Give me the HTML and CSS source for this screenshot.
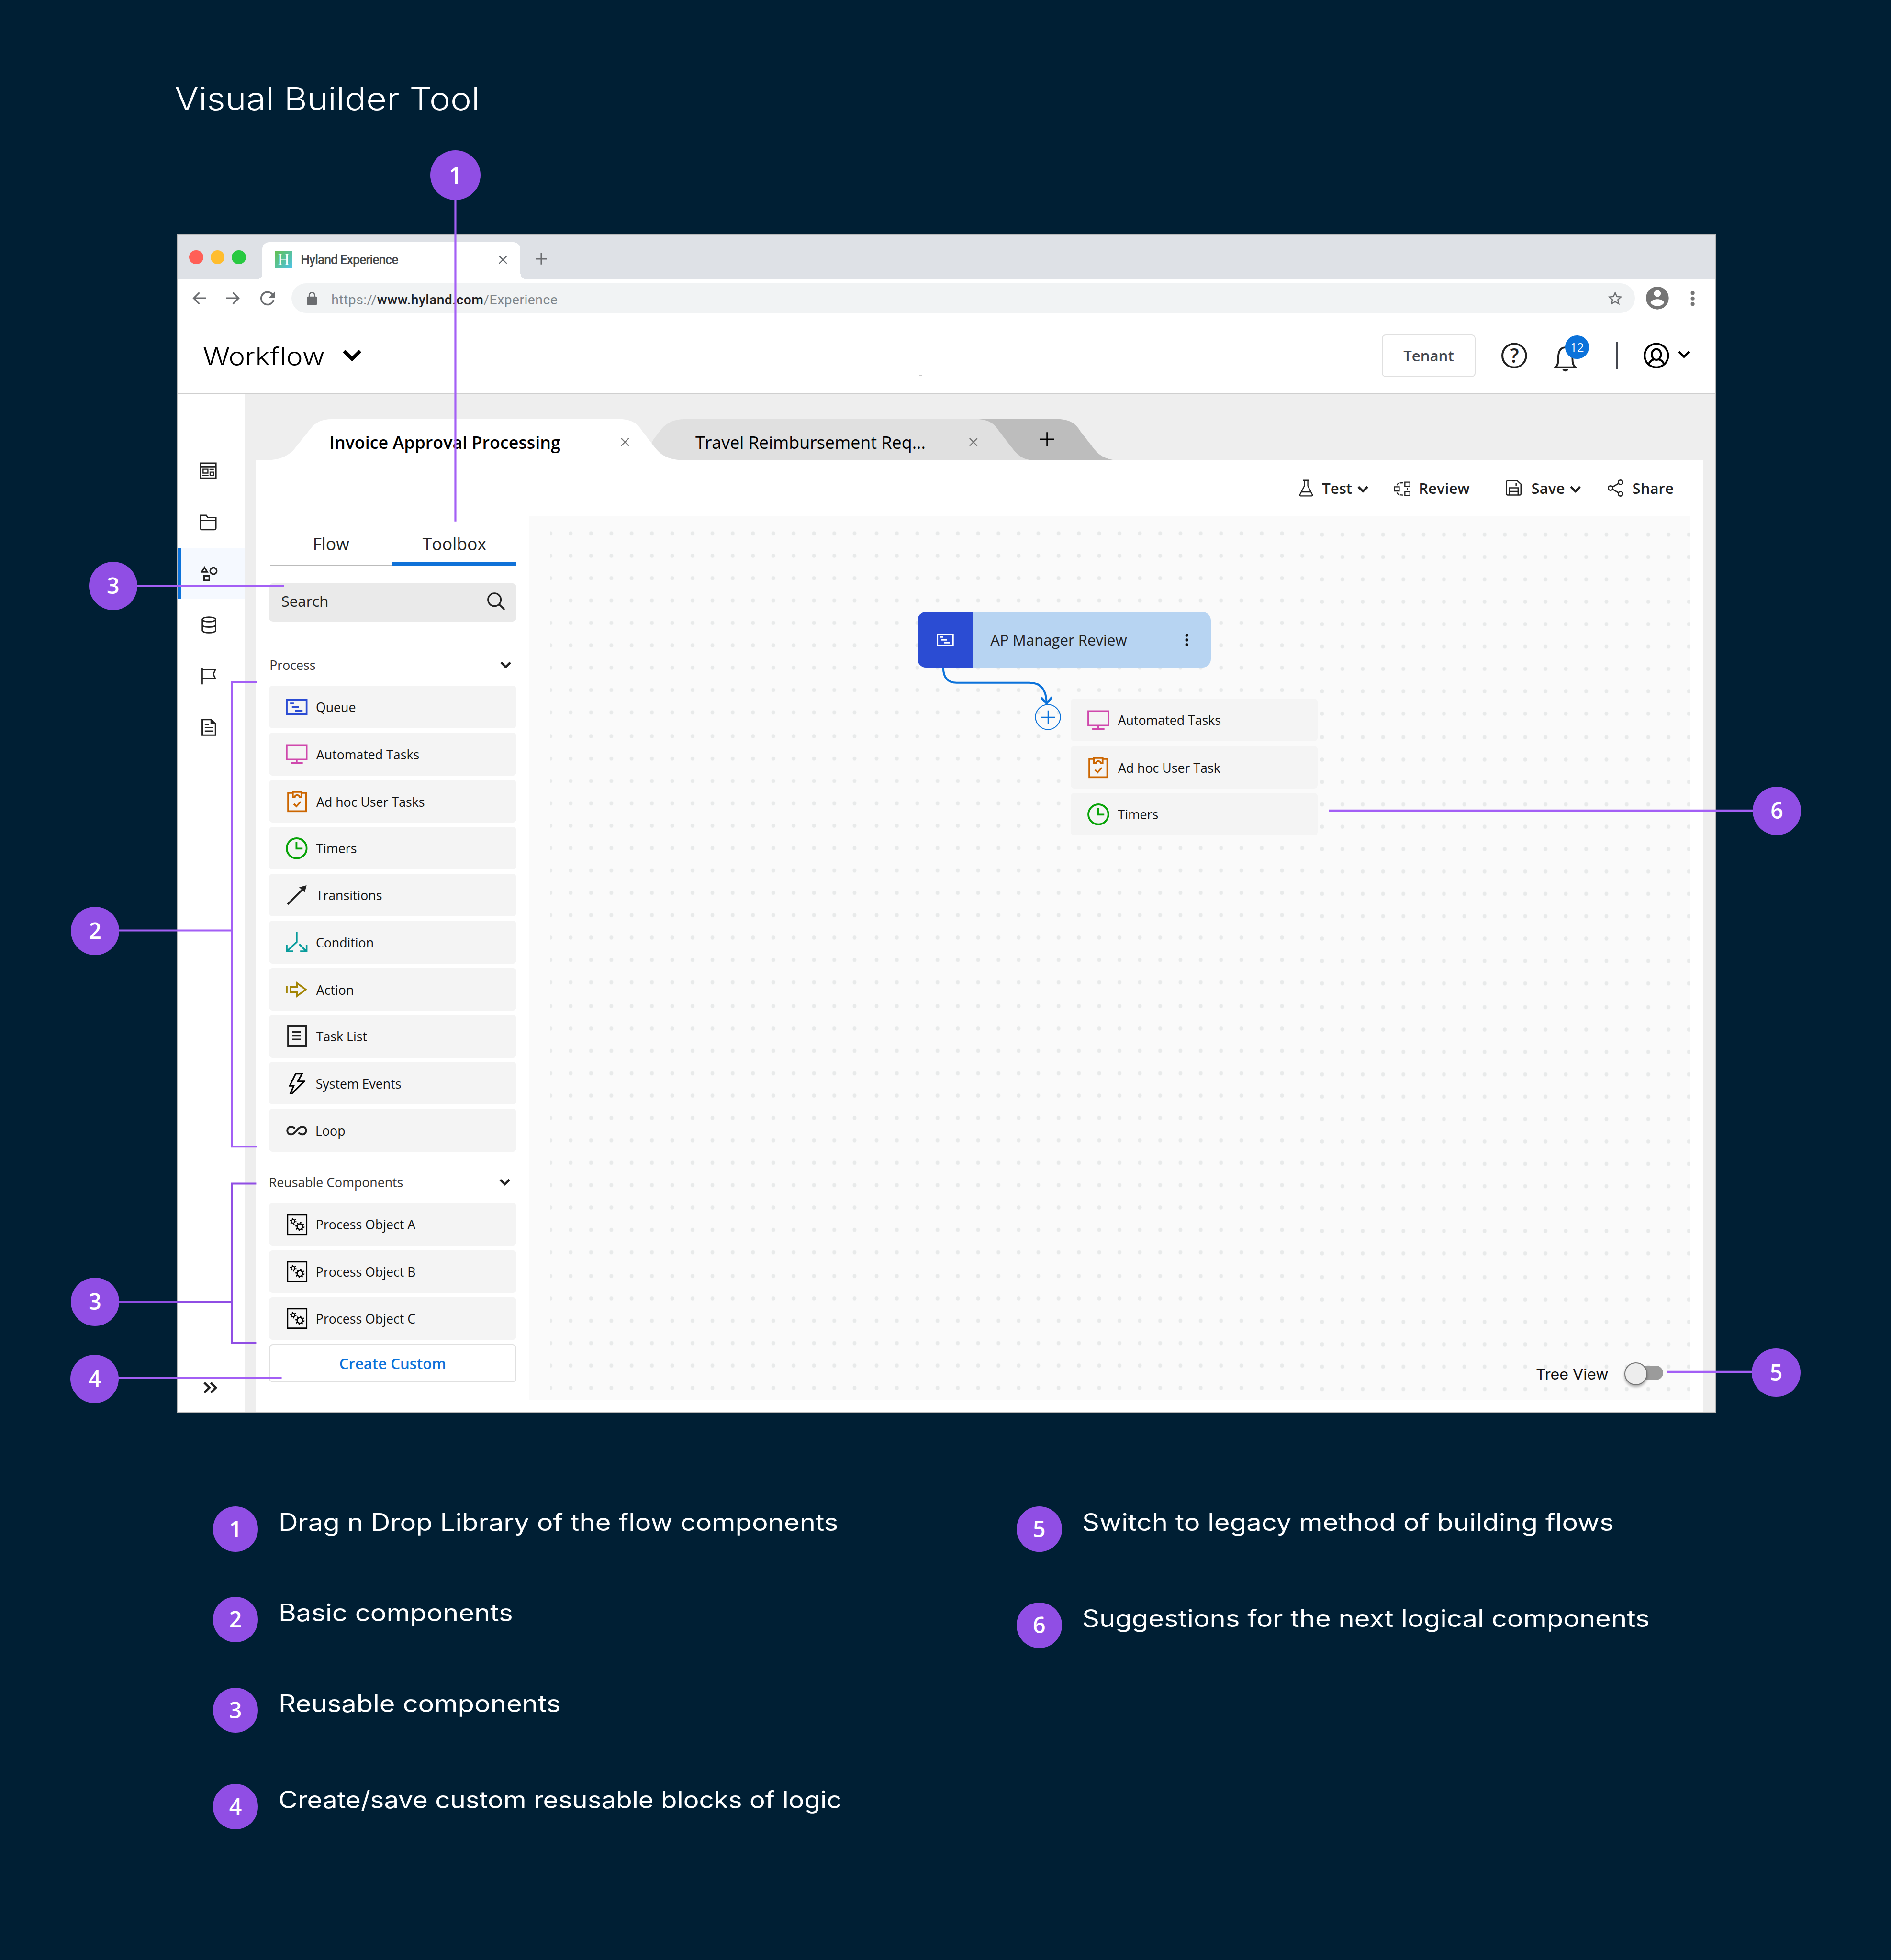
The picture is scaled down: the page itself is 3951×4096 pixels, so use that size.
FILE: index.html
```html
<!DOCTYPE html>
<html lang="en">
<head>
<meta charset="utf-8">
<title>Visual Builder Tool</title>
<link rel="stylesheet" href="styles.css">
</head>
<body>
<svg class="defs" width="0" height="0" aria-hidden="true">
  <symbol id="i-chevron" viewBox="0 0 27 17"><path d="M2.4 2.6 13.5 13.6 24.6 2.6" fill="none" stroke="currentColor" stroke-width="5.4"/></symbol>
  <symbol id="i-close" viewBox="0 0 20 20"><path d="M1 1l18 18M19 1 1 19" fill="none" stroke="currentColor" stroke-width="2.6"/></symbol>
  <symbol id="i-queue" viewBox="0 0 50 37"><path d="M2.2 2.2h45.6v32.6H2.2z" fill="none" stroke="currentColor" stroke-width="4.2"/><path d="M10 10h8.5M14 18.3h16.500M21 26.5h17.500" stroke="currentColor" stroke-width="4.2"/></symbol>
  <symbol id="i-monitor" viewBox="0 0 50 45"><path d="M2.100 2.100h45.800v32.800H2.100zM25 35v7M11 42.600h28" fill="none" stroke="currentColor" stroke-width="4"/></symbol>
  <symbol id="i-clipboard" viewBox="0 0 45 48"><path d="M11 4H2.200v41.800h40.600V4H34M12.800 2h19.400v12.200h-4.200c0-6.500-11-6.500-11 0h-4.200z" fill="none" stroke="currentColor" stroke-width="4"/><path d="M15 29l6 5.500 9.500-10.500" fill="none" stroke="currentColor" stroke-width="4"/></symbol>
  <symbol id="i-timer" viewBox="0 0 50 50"><circle cx="25" cy="25" r="22.800" fill="none" stroke="currentColor" stroke-width="4.200"/><path d="M24.500 10v15.500H38.500" fill="none" stroke="currentColor" stroke-width="4.200"/></symbol>
  <symbol id="i-arrow" viewBox="0 0 45 45"><path d="M2 43 36 9" stroke="currentColor" stroke-width="4"/><path d="M45 0 28 4.500 40.500 16z" fill="currentColor"/></symbol>
  <symbol id="i-branch" viewBox="0 0 50 47"><path d="M25 0v23.500L3.500 43.500M2.200 30v14.600H17M31 28.500 46 43.500M33 44.600h14.800V30" fill="none" stroke="currentColor" stroke-width="4"/></symbol>
  <symbol id="i-action" viewBox="0 0 49 39"><path d="M2.200 11.500v16.200" stroke="currentColor" stroke-width="4"/><path d="M11 13.200h14.200V4.600L45.500 19.500 25.200 34.400v-8.600H11z" fill="none" stroke="currentColor" stroke-width="3.800"/></symbol>
  <symbol id="i-list" viewBox="0 0 45 49"><path d="M2.200 2.200h40.600v44.400H2.200z" fill="none" stroke="currentColor" stroke-width="4.200"/><path d="M11.500 15h19.500M11.500 23.500h19.500M11.500 31.800h19.500" stroke="currentColor" stroke-width="3.800"/></symbol>
  <symbol id="i-bolt" viewBox="0 0 38 49"><path d="M16 1.800h14.500L21 19.200h14.500L7.500 47H4l7.500-17.500H2.500z" fill="none" stroke="currentColor" stroke-width="3.400"/></symbol>
  <symbol id="i-loop" viewBox="0 0 47 21"><path d="M19.500 6.500C16.500 3.500 14 2.200 10.700 2.200a8.300 8.300 0 0 0 0 16.600C20 18.800 26 2.200 36.300 2.200a8.300 8.300 0 0 1 0 16.600c-3.300 0-5.800-1.800-8.800-4.300" fill="none" stroke="currentColor" stroke-width="4.200"/></symbol>
  <symbol id="i-object" viewBox="0 0 47 48"><path d="M1.800 1.800h43.400v44.400H1.800z" fill="none" stroke="currentColor" stroke-width="3.400"/><g fill="none" stroke="currentColor"><circle cx="14.500" cy="16.500" r="4" stroke-width="2.300"/><circle cx="14.500" cy="16.500" r="6.300" stroke-width="2.800" stroke-dasharray="2.200 4.400"/><circle cx="30" cy="28.500" r="6.400" stroke-width="2.900"/><circle cx="30" cy="28.500" r="9" stroke-width="3" stroke-dasharray="2.900 4.170"/></g></symbol>
</svg>

<div class="page">
  <h1 class="title wide">Visual Builder Tool</h1>

  <main class="window">
    <div class="tabstrip">
      <i class="light red"></i><i class="light amber"></i><i class="light green"></i>
      <div class="browser-tab">
        <span class="logo">H</span>
        <span class="tab-name">Hyland Experience</span>
        <svg class="tab-close"><use href="#i-close"/></svg>
      </div>
      <svg class="new-tab" viewBox="0 0 26 26"><path d="M13 0v26M0 13h26" stroke="currentColor" stroke-width="3.200"/></svg>
    </div>

    <div class="urlbar">
      <svg class="nav-icon" viewBox="0 0 31 29"><path d="M31 14.500H3M16 1.500 3 14.500l13 13" fill="none" stroke="currentColor" stroke-width="3.600"/></svg>
      <svg class="nav-icon forward" viewBox="0 0 31 29"><path d="M0 14.500h28M15 1.500l13 13-13 13" fill="none" stroke="currentColor" stroke-width="3.600"/></svg>
      <svg class="reload" viewBox="0 0 34 34"><path d="M28.500 8A14.200 14.200 0 1 0 30.800 20.500" fill="none" stroke="currentColor" stroke-width="3.800"/><path d="M34 1v14.500H19.500z" fill="currentColor"/></svg>
      <div class="pill">
        <svg class="lock" viewBox="0 0 24 30"><path d="M5.800 12V7.500a6.200 6.200 0 0 1 12.400 0V12" fill="none" stroke="currentColor" stroke-width="3"/><rect y="10.500" width="24" height="19.500" rx="3" fill="currentColor"/></svg>
        <span class="url">https://<b>www.hyland.com</b>/Experience</span>
        <svg class="star" viewBox="0 0 34 33"><path d="M17 4.200l3.900 8.700 9.300.9-7 6.300 2 9.200-8.200-4.800-8.200 4.800 2-9.200-7-6.300 9.300-.9z" fill="none" stroke="currentColor" stroke-width="2.700"/></svg>
      </div>
      <svg class="profile" viewBox="0 0 52 52"><circle cx="26" cy="26" r="26" fill="#757575"/><circle cx="26" cy="15.800" r="7.900" fill="#fff"/><path d="M10.500 36.500c3-10.500 28-10.500 31 0-6.500 10.500-24.500 10.500-31 0z" fill="#fff"/></svg>
      <svg class="kebab" viewBox="0 0 10 34"><g fill="#757575"><circle cx="5" cy="4.500" r="4.400"/><circle cx="5" cy="17" r="4.400"/><circle cx="5" cy="29.500" r="4.400"/></g></svg>
    </div>

    <header class="appbar">
      <span class="app-name wide">Workflow</span>
      <svg class="app-caret" viewBox="0 0 43 26"><path d="M3 3l18.500 18L40 3" fill="none" stroke="currentColor" stroke-width="8"/></svg>
      <i class="speck"></i>
      <button class="tenant">Tenant</button>
      <svg class="help" viewBox="0 0 58 58"><circle cx="29" cy="29" r="26.800" fill="none" stroke="currentColor" stroke-width="4.400"/><text x="29.500" y="45" text-anchor="middle" class="help-mark">?</text></svg>
      <div class="bell">
        <svg viewBox="0 0 52 58"><path d="M3.500 48.500h45c-5-5.500-6.500-10-6.500-20 0-16-4-25.500-16-25.500S9.500 12.500 9.500 28.500c0 10-1 14.500-6 20z" fill="none" stroke="currentColor" stroke-width="4.200"/><path d="M19 53h14c-2 6.500-12 6.500-14 0z" fill="currentColor"/></svg>
        <span class="count">12</span>
      </div>
      <i class="divider"></i>
      <svg class="user" viewBox="0 0 58 58"><g fill="none" stroke="currentColor" stroke-width="4.400"><circle cx="29" cy="29" r="26.600"/><ellipse cx="29" cy="26.500" rx="10.500" ry="12.200"/><path d="M12 49c1.500-7 6-10 12-11.500M46 49c-1.500-7-6-10-12-11.500"/></g></svg>
      <svg class="user-caret" viewBox="0 0 27 17"><path d="M2 2.300 13.500 13.800 25 2.300" fill="none" stroke="currentColor" stroke-width="4.600"/></svg>
    </header>

    <div class="workspace">
      <nav class="rail">
        <a><svg viewBox="0 0 39 39" class="r38"><path d="M2 2.500h35v34H2zM2 9.800h35" fill="none" stroke="currentColor" stroke-width="3.800"/><path d="M8 16h11v8.500H8zM24 22.500h7.500v8H24z" fill="none" stroke="currentColor" stroke-width="2.600"/><path d="M22.500 16.500h10M6.500 30h14" stroke="currentColor" stroke-width="3"/></svg></a>
        <a><svg viewBox="0 0 39 36" class="r38"><path d="M1.700 13V1.700h13.500l3.500 4.800h18.600V31a3.300 3.300 0 0 1-3.300 3.300H5A3.300 3.300 0 0 1 1.700 31V13h35.600" fill="none" stroke="currentColor" stroke-width="3"/></svg></a>
        <a class="active"><svg viewBox="0 0 38 34" class="r38 shapes"><g fill="none" stroke="currentColor" stroke-width="3.400"><path d="M8.800 3.300 14.800 13H2.800z"/><circle cx="28.700" cy="11" r="7.300"/><path d="M8 21.700h11.500V32H8z"/></g></svg></a>
        <a><svg viewBox="0 0 33 39" class="r33"><g fill="none" stroke="currentColor" stroke-width="3"><ellipse cx="16.500" cy="7" rx="15" ry="5.300"/><path d="M1.500 7v25c0 7 30 7 30 0V7M1.500 19.500c0 6.500 30 6.500 30 0"/></g></svg></a>
        <a><svg viewBox="0 0 34 38" class="r33"><path d="M1.600 0v38M1.600 4h30.200L27 14.500 31.800 25H1.600" fill="none" stroke="currentColor" stroke-width="3"/></svg></a>
        <a><svg viewBox="0 0 34 39" class="r33"><path d="M1.700 1.700h20L32 11.500v25.800H1.700z" fill="none" stroke="currentColor" stroke-width="3.200"/><path d="M20.500 1v12H33z" fill="currentColor"/><path d="M7.500 12.500h9M7.500 20h18.500M7.500 28h18.500" stroke="currentColor" stroke-width="3"/></svg></a>
        <a class="expand"><svg viewBox="0 0 31 26" class="r31"><path d="M2 1.800 13.500 13 2 24.200M16.500 1.800 28 13 16.500 24.200" fill="none" stroke="currentColor" stroke-width="5"/></svg></a>
      </nav>

      <section class="main">
        <div class="doc-tabs">
          <svg class="tab-shapes" viewBox="575.800 945.200 1960 92" preserveAspectRatio="none">
            <path d="M2150 945.300H2383c25 0 40 10 50 27l29.500 38c12 16 25 23 45 26.700H2150z" fill="#bdbdbd"/>
            <path d="M1450 1037 1471 991.700 1490 967C1503 952 1520 945.300 1541.700 945.300H2200c25 0 40 10 50 27l29.500 38c13 18 28 26.700 45.500 26.700z" fill="#e0e0e0"/>
            <path d="M603 1037c25 0 42-7 57.600-21.500L699 967.300c12-15.500 27-22 47.700-22H1396.600c25 0 40 10 50 27l29.500 38c14 18 34 26.700 61.400 26.700z" fill="#fff"/>
          </svg>
          <div class="doc-tab first"><span>Invoice Approval Processing</span><svg><use href="#i-close"/></svg></div>
          <div class="doc-tab second"><span>Travel Reimbursement Req...</span><svg><use href="#i-close"/></svg></div>
          <svg class="add-doc" viewBox="0 0 32 32"><path d="M16 0v32M0 16h32" stroke="currentColor" stroke-width="2.900"/></svg>
        </div>

        <div class="sheet">
          <div class="actions">
            <svg class="a-flask" viewBox="0 0 33 39"><path d="M9 1.500h15M12.500 2v12.500L2.200 34.500q-1 3 2 3h24.600q3 0 2-3L20.500 14.500V2M5.500 28.500h22" fill="none" stroke="currentColor" stroke-width="2.600"/></svg>
            <span>Test</span>
            <svg class="a-caret"><use href="#i-chevron"/></svg>
            <svg class="a-review" viewBox="0 0 39 34"><path d="M25.500 1.500h11.500v9.500H25.500zM25.500 23h11.500v9.500H25.500zM1.500 12.200h11v9.600h-11z" fill="none" stroke="currentColor" stroke-width="2.600"/><path d="M7 8.500C9 4.500 12 3 21 3M7 25.500c2 4 5 5.500 14 5.500M31.200 15v4.500" fill="none" stroke="currentColor" stroke-width="2.500" stroke-dasharray="7 2"/></svg>
            <span>Review</span>
            <svg class="a-save" viewBox="0 0 36 36"><path d="M4.500 1.600H26l8.400 7.900v21.700a3 3 0 0 1-3 3H4.500a3 3 0 0 1-3-3V4.600a3 3 0 0 1 3-3zM8 33.500V18h20v15.500M8 26h20M23.500 7.500v6" fill="none" stroke="currentColor" stroke-width="2.700"/></svg>
            <span>Save</span>
            <svg class="a-caret"><use href="#i-chevron"/></svg>
            <svg class="a-share" viewBox="0 0 36 39"><g fill="none" stroke="currentColor" stroke-width="3"><circle cx="29" cy="6.500" r="5"/><circle cx="29" cy="32.500" r="5"/><circle cx="6.500" cy="19.500" r="5"/><path d="M11 17 24.500 9M11 22l13.500 8"/></g></svg>
            <span>Share</span>
          </div>

          <div class="columns">
            <aside class="toolbox">
              <div class="switcher"><span>Flow</span><span class="on">Toolbox</span></div>
              <div class="search"><span>Search</span><svg viewBox="0 0 41 40"><circle cx="16.500" cy="16.500" r="14.600" fill="none" stroke="currentColor" stroke-width="3.600"/><path d="M27 27l12.500 12" stroke="currentColor" stroke-width="4"/></svg></div>
              <div class="group"><span>Process</span><svg><use href="#i-chevron"/></svg></div>
              <ul class="items">
                <li><svg class="queue"><use href="#i-queue"/></svg>Queue</li>
                <li><svg class="monitor"><use href="#i-monitor"/></svg>Automated Tasks</li>
                <li class="low"><svg class="clip"><use href="#i-clipboard"/></svg>Ad hoc User Tasks</li>
                <li><svg class="timer"><use href="#i-timer"/></svg>Timers</li>
                <li><svg class="arrow"><use href="#i-arrow"/></svg>Transitions</li>
                <li><svg class="branch"><use href="#i-branch"/></svg>Condition</li>
                <li class="low"><svg class="action"><use href="#i-action"/></svg>Action</li>
                <li><svg class="list"><use href="#i-list"/></svg>Task List</li>
                <li class="low"><svg class="bolt"><use href="#i-bolt"/></svg>System Events</li>
                <li class="low"><svg class="loop"><use href="#i-loop"/></svg>Loop</li>
              </ul>
              <div class="group reusable"><span>Reusable Components</span><svg><use href="#i-chevron"/></svg></div>
              <ul class="items">
                <li><svg class="object"><use href="#i-object"/></svg>Process Object A</li>
                <li><svg class="object"><use href="#i-object"/></svg>Process Object B</li>
                <li><svg class="object"><use href="#i-object"/></svg>Process Object C</li>
              </ul>
              <button class="create">Create Custom</button>
            </aside>

            <div class="canvas">
              <svg class="dots" viewBox="1239.900 1162 2566.100 1990.300">
                <defs>
                  <pattern id="dot" width="45.730" height="50.400" patternUnits="userSpaceOnUse"><ellipse cx="22.860" cy="25.200" rx="4.200" ry="4.500" fill="#e8eaea"/></pattern>
                  <g id="band8">
                    <rect width="365.840" height="453.600" fill="url(#dot)"/>
                    <rect width="365.840" height="604.800" transform="translate(0 456.700)" fill="url(#dot)"/>
                    <rect width="365.840" height="604.800" transform="translate(0 1064.600)" fill="url(#dot)"/>
                    <rect width="365.840" height="302.400" transform="translate(0 1672.500)" fill="url(#dot)"/>
                  </g>
                  <g id="band16">
                    <rect width="731.680" height="453.600" transform="translate(0 2.700)" fill="url(#dot)"/>
                    <rect width="731.680" height="604.800" transform="translate(0 459)" fill="url(#dot)"/>
                    <rect width="731.680" height="604.800" transform="translate(0 1067)" fill="url(#dot)"/>
                    <rect width="731.680" height="302.400" transform="translate(0 1675)" fill="url(#dot)"/>
                  </g>
                </defs>
                <use href="#band8" x="1217" y="1176.400"/>
                <use href="#band8" x="1581.800" y="1176.400"/>
                <use href="#band8" x="1951.500" y="1176.400"/>
                <svg class="strip" x="2315.600" y="1162" width="639.500" height="1991"><use href="#band8" y="14.400"/><use href="#band8" x="365.840" y="14.400"/></svg>
                <use href="#band16" x="2954.700" y="1176.400"/>
                <use href="#band16" x="3689.100" y="1176.400"/>
              </svg>
              <div class="node">
                <span class="node-icon"><svg><use href="#i-queue"/></svg></span>
                <span class="node-name">AP Manager Review</span>
                <svg class="node-menu" viewBox="0 0 8 30"><circle cx="4" cy="4" r="3.500"/><circle cx="4" cy="15" r="3.500"/><circle cx="4" cy="26" r="3.500"/></svg>
              </div>
              <svg class="link" viewBox="2110 1500 290 150"><g fill="none" stroke="#0b72da"><path d="M2123.800 1503.500c0 22 10 34 30 34H2318c26 0 38 17 38.500 46" stroke-width="4.400"/><path d="M2344.500 1571l12 13 12-14" stroke-width="4.800"/><circle cx="2359.500" cy="1614.800" r="28" stroke-width="2.200"/><path d="M2344.800 1615.500h31M2360.300 1600v31" stroke-width="3.200"/></g></svg>
              <ul class="items suggestions">
                <li><svg class="monitor"><use href="#i-monitor"/></svg>Automated Tasks</li>
                <li class="low"><svg class="clip"><use href="#i-clipboard"/></svg>Ad hoc User Task</li>
                <li><svg class="timer"><use href="#i-timer"/></svg>Timers</li>
              </ul>
              <div class="tree-view"><span class="wide">Tree View</span><i class="toggle"></i></div>
            </div>
          </div>
        </div>
      </section>
    </div>
  </main>

  <section class="legend">
    <ul>
      <li><b>1</b><span class="wide">Drag n Drop Library of the flow components</span></li>
      <li><b>2</b><span class="wide">Basic components</span></li>
      <li><b>3</b><span class="wide">Reusable components</span></li>
      <li class="apart"><b>4</b><span class="wide tight">Create/save custom resusable blocks of logic</span></li>
    </ul>
    <ul>
      <li><b>5</b><span class="wide">Switch to legacy method of building flows</span></li>
      <li class="apart"><b>6</b><span class="wide">Suggestions for the next logical components</span></li>
    </ul>
  </section>

  <svg class="callouts" viewBox="0 0 4258 4414"><g fill="none" stroke-width="4.500">
    <g stroke="#a35ff5">
      <path d="M1025.400 440V1174.400M300 1319.500H639.600M578 1535.700H521.700V2582.300H578M260 2095.600H521.700M260 3103.200H634.300M2992.300 1825.500H3960M3753.800 3089.600H3960"/>
    </g>
    <path stroke="#904ee4" d="M577 2665.700H521.700V3024.500H577M260 2932.500H521.700"/>
  </g></svg>
  <b class="pin p1">1</b>
  <b class="pin p3a">3</b>
  <b class="pin p2">2</b>
  <b class="pin p3b">3</b>
  <b class="pin p4">4</b>
  <b class="pin p5">5</b>
  <b class="pin p6">6</b>
</div>
</body>
</html>
```
FILE: styles.css
```css
/* 1rem is 1/42.58 of the window width, so the whole board scales with it */
html { font-size: calc(100vw / 42.58); }
* { box-sizing: border-box; margin: 0; padding: 0; }
body { background: #001f34; font-family: "Open Sans", sans-serif; color: #222; }
ul { list-style: none; }
i { display: block; font-style: normal; }
svg { display: block; flex: none; overflow: visible; }
.defs { position: absolute; }
button { font: inherit; background: #fff; }

.page { position: relative; height: 44.14rem; overflow: hidden; padding: 1.862rem 0 0 3.983rem; }
.wide { font-family: Inter, sans-serif; display: block; white-space: nowrap; transform: scaleX(1.12); transform-origin: 0 50%; }
.title { font-size: .715rem; line-height: .715rem; font-weight: 300; color: #fff; margin-left: -.045rem; }

.window { display: flex; flex-direction: column; width: 34.66rem; height: 26.549rem; margin-top: 2.693rem; border: .026rem solid #b9b9b9; background: #fff; }

/* browser chrome */
.tabstrip { display: flex; align-items: center; height: .988rem; padding-left: .257rem; background: #dee1e6; flex: none; }
.light { width: .315rem; height: .315rem; border-radius: 50%; margin: .02rem .165rem 0 0; }
.red { background: #ff5f57; }
.amber { background: #ffbd2e; }
.green { background: #28c941; margin-right: 0; }
.browser-tab { position: relative; display: flex; align-items: center; align-self: flex-end; width: 5.808rem; height: .823rem; margin-left: .375rem; padding: 0 .3rem .04rem .28rem; background: #fff; border-radius: .16rem .16rem 0 0; }
.browser-tab::before, .browser-tab::after { content: ""; position: absolute; bottom: 0; width: .12rem; height: .12rem; }
.browser-tab::before { right: 100%; background: radial-gradient(circle at 0 0, transparent .12rem, #fff .122rem); }
.browser-tab::after { left: 100%; background: radial-gradient(circle at 100% 0, transparent .12rem, #fff .122rem); }
.logo { width: .39rem; height: .39rem; font: .38rem/.38rem "Liberation Serif", serif; color: #fff; text-align: center; background: linear-gradient(135deg, #62c04f, #4ec3ea); }
.tab-name { margin-left: .19rem; font: 500 .288rem Roboto, sans-serif; letter-spacing: -.0115rem; color: #45494d; }
.tab-close { width: .19rem; height: .19rem; margin-left: auto; color: #5f6368; }
.new-tab { width: .257rem; height: .257rem; margin: .08rem 0 0 .34rem; color: #6b6d70; }

.urlbar { display: flex; align-items: center; height: .887rem; padding-left: .332rem; border-bottom: .02rem solid #cdcdcd; color: #6b6d70; flex: none; }
.nav-icon { width: .305rem; height: .285rem; }
.forward { margin-left: .455rem; }
.reload { width: .34rem; height: .34rem; margin: 0 .372rem 0 .455rem; }
.pill { display: flex; align-items: center; width: 30.246rem; height: .67rem; border-radius: .335rem; background: #f1f3f4; padding: 0 .273rem 0 .345rem; }
.lock { width: .233rem; height: .295rem; }
.url { margin-left: .315rem; padding-top: .06rem; font: 400 .305rem Roboto, sans-serif; letter-spacing: .005rem; color: #80868b; }
.url b { font-weight: 500; color: #202124; }
.star { width: .337rem; height: .325rem; margin-left: auto; }
.profile { width: .514rem; height: .514rem; margin-left: .25rem; }
.kebab { width: .1rem; height: .34rem; margin-left: .49rem; }

/* application bar */
.appbar { position: relative; display: flex; align-items: center; height: 1.708rem; padding: 0 .567rem; border-bottom: .03rem solid #cfcfcf; flex: none; }
.app-name { width: 2.46rem; font-size: .55rem; font-weight: 300; line-height: .66rem; color: #000; padding-top: .03rem; transform: scaleX(1.143); }
.app-caret { width: .425rem; height: .255rem; margin-left: .682rem; color: #000; }
.speck { position: absolute; left: 16.69rem; top: 1.27rem; width: .07rem; height: .025rem; background: #c8c8c8; }
.tenant { width: 2.11rem; height: .96rem; margin-left: auto; border: .028rem solid #e0e0e0; border-radius: .09rem; font-weight: 600; font-size: .336rem; color: #44474f; }
.help { width: .577rem; height: .585rem; margin-left: .58rem; }
.help-mark { font: 600 45px "Open Sans", sans-serif; fill: currentColor; }
.bell { position: relative; margin: .15rem 0 0 .61rem; }
.bell svg { width: .513rem; height: .58rem; }
.count { position: absolute; left: .255rem; top: -.245rem; width: .53rem; height: .53rem; border-radius: 50%; background: #0b72da; color: #fff; font-size: .275rem; line-height: .53rem; text-align: center; }
.divider { width: .045rem; height: .6rem; margin: 0 .58rem 0 .875rem; background: #44474f; }
.user { width: .577rem; height: .585rem; color: #000; }
.user-caret { width: .27rem; height: .17rem; margin: -.06rem 0 0 .204rem; color: #000; }

/* left rail */
.workspace { display: flex; flex: 1; min-height: 0; }
.rail { display: flex; flex-direction: column; width: 1.514rem; padding-top: 1.155rem; }
.rail a { display: flex; align-items: center; height: 1.155rem; padding-left: .485rem; }
.rail .active { background: #f5f9ff; box-shadow: inset .068rem 0 #0b72da; }
.r38 { width: .385rem; height: .385rem; }
.r33 { width: .335rem; height: .388rem; margin-left: .045rem; }
.shapes { margin-left: .025rem; }
.rail .expand { margin-top: auto; height: 1.08rem; padding-left: .575rem; }
.r31 { width: .31rem; height: .26rem; }

/* document tabs */
.main { display: flex; flex-direction: column; flex: 1; padding: 0 .269rem 0 .236rem; background: #eee; }
.doc-tabs { position: relative; display: flex; height: 1.493rem; padding: .575rem 0 0 1.66rem; color: #000; flex: none; }
.tab-shapes { position: absolute; left: 0; bottom: 0; width: 19.6rem; height: .922rem; }
.doc-tab { position: relative; display: flex; align-items: center; padding-top: .1rem; font-size: .3865rem; }
.doc-tab svg { width: .19rem; height: .19rem; color: #757575; }
.first { width: 8.244rem; font-weight: 600; }
.first span { width: 6.561rem; }
.second { width: 7.76rem; }
.second span { width: 6.16rem; }
.add-doc { position: relative; width: .315rem; height: .32rem; margin-top: .28rem; }

/* sheet */
.sheet { display: flex; flex-direction: column; flex: 1; background: #fff; }
.actions { display: flex; align-items: center; justify-content: flex-end; height: 1.251rem; padding-right: .665rem; font-weight: 600; font-size: .336rem; flex: none; }
.a-flask { width: .322rem; height: .389rem; margin-right: .192rem; }
.a-caret { width: .252rem; height: .159rem; margin: .05rem 0 0 .115rem; }
.a-review { width: .384rem; height: .34rem; margin: .03rem .18rem 0 .568rem; }
.a-save { width: .358rem; height: .358rem; margin: 0 .215rem 0 .815rem; }
.a-share { width: .36rem; height: .389rem; margin: 0 .2rem 0 .596rem; }

.columns { display: flex; flex: 1; }
.toolbox { width: 6.161rem; padding: 0 .287rem 0 .3rem; }
.switcher { display: flex; margin-left: .02rem; font-size: .384rem; line-height: .52rem; text-align: center; }
.switcher span { flex: 0 0 2.761rem; height: 1.134rem; padding-top: .363rem; border-bottom: .024rem solid #bbb; }
.switcher .on { flex: 1; border-bottom: .096rem solid #1072d8; }
.search { display: flex; align-items: center; justify-content: space-between; height: .86rem; margin-top: .386rem; padding: 0 .25rem .06rem .28rem; border-radius: .09rem; background: #eaeaea; font-size: .336rem; }
.search svg { width: .405rem; height: .4rem; }
.group { display: flex; align-items: center; justify-content: space-between; height: .4rem; margin: .774rem 0 .274rem; padding: 0 .115rem 0 .015rem; font-size: .288rem; color: #333; }
.group svg { width: .25rem; height: .16rem; color: #222; }
.reusable { margin-top: .487rem; padding: 0 .135rem 0 0; }
.items { display: flex; flex-direction: column; gap: .099rem; }
.items li { display: flex; align-items: center; height: .96rem; border-radius: .08rem; background: #f4f4f4; font-size: .288rem; color: #111; padding-left: .385rem; }
.items .low { padding-top: .02rem; }
.items svg { color: #222; }
.items .queue { width: .493rem; height: .365rem; margin-right: .18rem; color: #2b4cd3; }
.items .monitor { width: .493rem; height: .45rem; margin-right: .19rem; color: #cf48ac; }
.items .clip { width: .448rem; height: .48rem; margin: 0 .215rem 0 .022rem; color: #cc6600; }
.items .timer { width: .493rem; height: .493rem; margin-right: .187rem; color: #07a307; }
.items .arrow { width: .45rem; height: .45rem; margin: 0 .21rem 0 .02rem; }
.items .branch { width: .493rem; height: .468rem; margin-right: .18rem; color: #079b9b; }
.items .action { width: .487rem; height: .388rem; margin-right: .196rem; color: #a38505; }
.items .list { width: .446rem; height: .485rem; margin: 0 .213rem 0 .023rem; }
.items .bolt { width: .378rem; height: .488rem; margin: 0 .23rem 0 .062rem; color: #000; }
.items .loop { width: .472rem; height: .211rem; margin: 0 .187rem 0 .005rem; }
.items .object { width: .467rem; height: .48rem; margin: 0 .19rem 0 .015rem; color: #000; }
.create { display: block; width: 100%; height: .86rem; margin-top: .102rem; border: .028rem solid #e0e0e0; border-radius: .09rem; font-weight: 600; font-size: .336rem; color: #0b72da; }

/* flow canvas: nodes sit at free positions */
.canvas { position: relative; width: 26.141rem; height: 19.903rem; background: #fafafa; overflow: hidden; }
.dots { position: absolute; left: .48rem; top: 0; width: 25.661rem; height: 19.903rem; overflow: hidden; }
.strip { overflow: hidden; }
.node { position: absolute; left: 8.744rem; top: 2.168rem; display: flex; align-items: center; width: 6.608rem; height: 1.252rem; border-radius: .19rem; overflow: hidden; background: #b7d4f2; font-size: .336rem; }
.node-icon { display: flex; align-items: center; justify-content: center; width: 1.249rem; height: 100%; background: #2b4cd3; color: #fff; }
.node-icon svg { width: .387rem; height: .29rem; }
.node-name { margin-left: .393rem; }
.node-menu { width: .08rem; height: .29rem; margin: 0 .507rem 0 auto; fill: #111; }
.link { position: absolute; left: 9.181rem; top: 3.38rem; width: 2.9rem; height: 1.5rem; }
.suggestions { position: absolute; left: 12.189rem; top: 4.12rem; width: 5.57rem; gap: .101rem; }
.tree-view { position: absolute; left: 22.67rem; top: 19.06rem; display: flex; align-items: center; height: .48rem; }
.tree-view .wide { width: 1.99rem; font-size: .32rem; color: #111; padding-top: .06rem; transform: scaleX(1.083); }
.toggle { position: relative; width: .81rem; height: .33rem; margin-left: .06rem; border-radius: .165rem; background: #9b9b9b; }
.toggle::before { content: ""; position: absolute; left: -.06rem; top: -.075rem; width: .475rem; height: .475rem; border-radius: 50%; border: .03rem solid #757575; background: #ededed; box-shadow: 0 .04rem .06rem rgba(0,0,0,.3); }

/* legend */
.legend { display: flex; margin: 2.109rem 0 0 .809rem; color: #fff; font-size: .54rem; }
.legend ul { display: flex; flex-direction: column; gap: 1.02rem; width: 18.098rem; flex: none; }
.legend li { display: flex; align-items: center; height: 1.02rem; }
.legend .apart { margin-top: .13rem; }
.legend b { width: 1.02rem; height: 1.02rem; border-radius: 50%; background: #904ee4; font-weight: 600; font-size: .5rem; line-height: 1rem; text-align: center; margin-right: .455rem; }
.legend .wide { padding-bottom: .32rem; transform: scaleX(1.123); }
.legend .tight { transform: scaleX(1.091); }

/* callouts over the board */
.callouts { position: absolute; left: 0; top: 0; width: 42.58rem; height: 44.14rem; }
.pin { position: absolute; width: 1.09rem; height: 1.09rem; margin: -.545rem 0 0 -.545rem; border-radius: 50%; background: #904ee4; color: #fff; font-weight: 600; font-size: .5rem; line-height: 1.07rem; text-align: center; }
.p1 { left: 10.254rem; top: 3.946rem; width: 1.137rem; height: 1.127rem; margin: -.563rem 0 0 -.568rem; font-size: .52rem; line-height: 1.1rem; }
.p3a { left: 2.547rem; top: 13.2rem; }
.p2 { left: 2.139rem; top: 20.966rem; }
.p3b { left: 2.14rem; top: 29.317rem; }
.p4 { left: 2.13rem; top: 31.053rem; }
.p5 { left: 39.994rem; top: 30.913rem; }
.p6 { left: 40.01rem; top: 18.265rem; }
```
